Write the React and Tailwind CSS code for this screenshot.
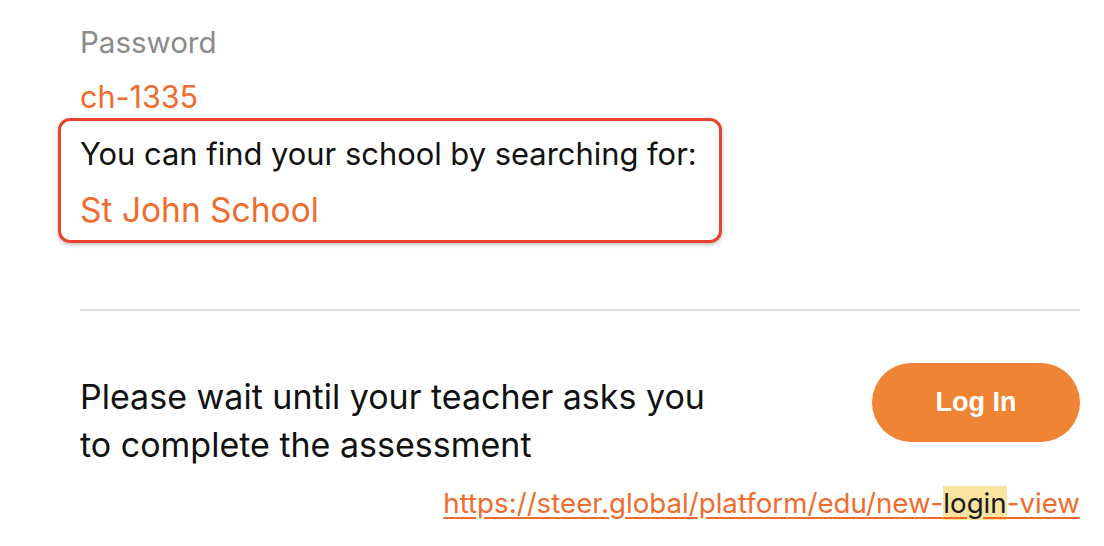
export default function App() {
  return (
    <div
      className="w-[1104px] h-[546px] bg-white overflow-hidden pl-[80px] pr-[24px] pt-[26px]"
      style={{ fontFamily: "Inter, 'Noto Sans', sans-serif" }}
    >
      <div className="text-[29.5px] leading-[32px] text-[#8a8a8a]">Password</div>
      <div className="mt-[22px] text-[30.5px] leading-[34px] text-[#ef6c2f]">ch-1335</div>

      <div className="-ml-[22px] mt-[4px] w-[664px] h-[125px] rounded-[12px] border-[3px] border-[#e8432c] shadow-[0_2px_4px_rgba(0,0,0,0.25)] pl-[19px] pt-[17px]">
        <div className="text-[30.9px] leading-[32px] text-[#111]">
          You can find your school by searching for:
        </div>
        <div className="mt-[23px] text-[33.5px] leading-[34px] text-[#ef6c2f]">St John School</div>
      </div>

      <div className="mt-[66px] h-[2px] bg-[#dcdcdc] w-[1000px]" />

      <div className="mt-[52px] flex justify-between items-start w-[1000px]">
        <p className="text-[34px] leading-[48px] text-[#111] w-[640px] mt-[10px]">
          Please wait until your teacher asks you to complete the assessment
        </p>
        <button
          className="w-[208px] h-[79px] rounded-full bg-[#ee8434] text-white text-[27px] font-bold"
          style={{ fontFamily: "'Liberation Sans', Arial, sans-serif" }}
        >
          Log In
        </button>
      </div>

      <div className="mt-[17px] w-[1000px] flex justify-end">
        <a className="text-[27.7px] leading-[34px] text-[#ef6c2f] underline underline-offset-[4px]">
          https://steer.global/platform/edu/new-
          <span className="bg-[#fbe3a0] text-[#1a1a1a]">login</span>-view
        </a>
      </div>
    </div>
  );
}
